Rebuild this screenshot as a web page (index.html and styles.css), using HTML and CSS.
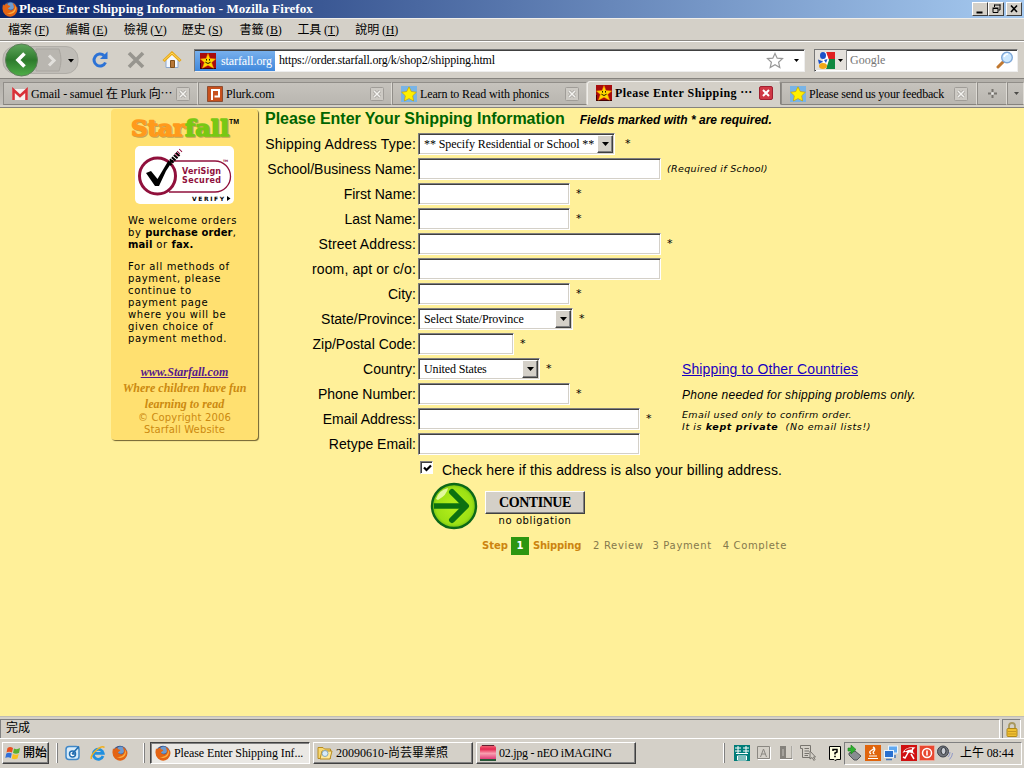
FILE: index.html
```html
<!DOCTYPE html>
<html lang="zh-Hant">
<head>
<meta charset="utf-8">
<title>Please Enter Shipping Information</title>
<link rel="stylesheet" href="styles.css">
</head>
<body>
<svg class="defs" width="0" height="0">
  <defs>
    <linearGradient id="gGreen" x1="0" y1="0" x2="0" y2="1"><stop offset="0" stop-color="#5fa65c"/><stop offset=".5" stop-color="#2d7a2c"/><stop offset="1" stop-color="#4fae48"/></linearGradient>
    <radialGradient id="gLime" cx=".5" cy=".5" r=".55"><stop offset="0" stop-color="#b6f01c"/><stop offset=".75" stop-color="#9ce014"/><stop offset="1" stop-color="#5cae10"/></radialGradient>
    <linearGradient id="gPink" x1="0" y1="0" x2="0" y2="1"><stop offset="0" stop-color="#f0707c"/><stop offset=".3" stop-color="#e62850"/><stop offset=".6" stop-color="#f8a0b0"/><stop offset="1" stop-color="#e03c78"/></linearGradient>
    <symbol id="firefox" viewBox="0 0 16 16"><circle cx="8" cy="7.8" r="7" fill="#2b4f8f"/><circle cx="8.6" cy="5.2" r="3.6" fill="#6d9bd0"/><path d="M1 3.2 2.2 4.4Q3.8 2.2 6 2.4L5.2 4Q8 4.2 8.4 5.6L6 7.2Q6.6 9.8 10 9.2 12.6 8.2 11.6 4.6L10.6 2Q14 3 14.4 6.6L15 5.4Q16.6 10.6 12.8 14 8 17.4 3.2 13.8-.2 10.6 .6 5.8Z" fill="#e36414"/><path d="M13.4 4.4Q15 8 12 11.6 8.6 14.2 4.6 12 9.4 12.8 12 9.2 13.6 7 13.4 4.4Z" fill="#fbb040"/></symbol>
    <symbol id="bluestar" viewBox="0 0 16 16"><path d="M0 0H16V16H0Z" fill="#78b4e6"/><path d="M8 .8 10.3 5.5 15.4 6.2 11.7 9.8 12.6 15 8 12.6 3.4 15 4.3 9.8 .6 6.2 5.7 5.5Z" fill="#fff000" stroke="#c8a000" stroke-width=".7"/></symbol>
    <symbol id="redstar" viewBox="0 0 16 16"><path d="M0 0H16V16H0Z" fill="#a80c0c"/><path d="M0 15.5H16M.5 16V10" stroke="#400" stroke-width="1"/><path d="M8 .6 9.9 5.4 15.6 6 11.6 9.6 13.6 15.2 8 12.2 2.4 15.2 4.4 9.6 .4 6 6.1 5.4Z" fill="#ffd800" stroke="#f89000" stroke-width=".5"/><path d="M6.5 6v1.6M9.5 6v1.6M5.4 9.2Q8 11.8 10.6 9.2" stroke="#202000" fill="none"/></symbol>
    <symbol id="closeTab" viewBox="0 0 14 14"><rect x=".5" y=".5" width="13" height="13" rx="1" fill="#cdcac4" stroke="#a09d98"/><path d="M4 4 10 10M10 4 4 10" stroke="#a5a29d" stroke-width="3"/><path d="M4 4 10 10M10 4 4 10" stroke="#f4f3f0" stroke-width="1.5"/></symbol>
    <symbol id="arrowDown" viewBox="0 0 7 4"><path d="M0 0H7L3.5 4Z" fill="#000"/></symbol>
  </defs>
</svg>
<div class="window">
  <header class="titlebar">
    <svg class="i16"><use href="#firefox"/></svg>
    <span class="title">Please Enter Shipping Information - Mozilla Firefox</span>
    <span class="winbtns">
      <svg class="winbtn" viewBox="0 0 13 12"><path d="M3 9.5H9" stroke="#000" stroke-width="2"/></svg>
      <svg class="winbtn restore" viewBox="0 0 13 12"><path d="M5 2H11M5 1.500V4M10.500 1.500V7H9" fill="none" stroke="#000"/><path d="M3.500 5.500H8.500V9.500H3.500ZM3 5H9" fill="none" stroke="#000"/></svg>
      <svg class="winbtn" viewBox="0 0 13 12"><path d="M3.500 2.500 9.500 9M9.500 2.500 3.500 9" stroke="#000" stroke-width="1.600"/></svg>
    </span>
  </header>
  <nav class="menubar">
    <span>檔案 (<u>F</u>)</span><span>編輯 (<u>E</u>)</span><span>檢視 (<u>V</u>)</span><span>歷史 (<u>S</u>)</span><span>書籤 (<u>B</u>)</span><span>工具 (<u>T</u>)</span><span>說明 (<u>H</u>)</span>
  </nav>
  <div class="toolbar">
    <svg class="navbtns" width="78" height="34" viewBox="0 0 78 34">
      <rect x="1" y="3.500" width="75" height="27" rx="12" fill="#c0bdb7" stroke="#b0ada7"/>
      <path d="M34 6H57Q61 17 57 28H34Z" fill="#b9b6b0" stroke="#a9a6a0"/>
      <path d="M47 12.500 52 17.500 47 22.500" fill="none" stroke="#e2e0dc" stroke-width="3"/>
      <path d="M66 16H72L69 19.500Z" fill="#000"/>
      <circle cx="19.500" cy="17" r="16" fill="url(#gGreen)" stroke="#5b7d58"/>
      <path d="M22.500 10.500 16 17 22.500 23.500" fill="none" stroke="#fff" stroke-width="3.600"/>
    </svg>
    <svg class="reload" width="18" height="18" viewBox="0 0 18 18"><path d="M13 4.500A6 6 0 1 0 14.500 11.500" fill="none" stroke="#2c72d6" stroke-width="3"/><path d="M16.500 .5V8H9Z" fill="#2c72d6"/></svg>
    <svg class="stop" width="18" height="18" viewBox="0 0 18 18"><path d="M2 2 16 16M16 2 2 16" stroke="#97958f" stroke-width="3.600"/></svg>
    <svg class="home" width="20" height="18" viewBox="0 0 20 18"><path d="M4 9V16.500H16V9L10 3Z" fill="#f4f8ff" stroke="#8ca8d0"/><path d="M8.500 9.500H12.500V16.500H8.500Z" fill="#b87838" stroke="#80501c"/><path d="M1.500 10 10 2 18.500 10" fill="none" stroke="#e8a818" stroke-width="3"/><path d="M2 9.300 10 2 18 9.300" fill="none" stroke="#ffdc60" stroke-width="1"/></svg>
    <div class="urlbar">
      <span class="identity"><svg class="i16"><use href="#redstar"/></svg><span class="idname">starfall.org</span></span>
      <span class="url">https://order.starfall.org/k/shop2/shipping.html</span>
      <svg class="fav" width="18" height="17" viewBox="0 0 18 17"><path d="M9 1.500 11.200 6.200 16.500 6.600 12.600 10.200 13.800 15.500 9 12.700 4.200 15.500 5.400 10.200 1.500 6.600 6.800 6.200Z" fill="#fff" stroke="#989898" stroke-width="1.200"/></svg>
      <svg class="dd" width="5" height="3"><use href="#arrowDown"/></svg>
    </div>
    <div class="search">
      <span class="engine"><svg width="17" height="17" viewBox="0 0 17 17"><path d="M8 0H17V7H10Z" fill="#e02020"/><path d="M9 7H17V17H8Z" fill="#108840"/><path d="M8 0 11 8 8 17H5V0Z" fill="#fff"/><ellipse cx="5" cy="3.500" rx="3" ry="3.500" fill="#1c50c8"/><path d="M0 7.500 5 9.500 1 12ZM6 8 9.500 7 8 11Z" fill="#1c50c8"/><ellipse cx="5" cy="14" rx="4" ry="3" fill="#f0a818"/></svg><svg width="5" height="3"><use href="#arrowDown"/></svg></span>
      <span class="ph">Google</span>
      <svg width="18" height="18" viewBox="0 0 18 18"><path d="M8 10 2 16" stroke="#c07830" stroke-width="3" stroke-linecap="round"/><circle cx="11" cy="6.500" r="5.300" fill="#cce8ff" stroke="#7fa8d8" stroke-width="1.400"/><path d="M8 6Q9 3 12 3" fill="none" stroke="#fff" stroke-width="1.500"/></svg>
    </div>
  </div>
  <div class="tabs">
    <div class="tab t1"><svg class="i16" viewBox="0 0 16 16"><path d="M0 3H16V14H0Z" fill="#f6f0ee"/><path d="M1.500 14V4L8 10 14.500 4V14" fill="none" stroke="#d83038" stroke-width="2.600"/></svg><span class="tt">Gmail - samuel 在 Plurk 向⋯</span><svg class="x"><use href="#closeTab"/></svg></div>
    <div class="tab t2"><svg class="i16" viewBox="0 0 16 16"><path d="M.5.5H15.500V15.500H.5Z" fill="#c8501c" stroke="#8c4c30"/><path d="M5 14V4H12V10.500H7.500" fill="none" stroke="#fff" stroke-width="2"/></svg><span class="tt">Plurk.com</span><svg class="x"><use href="#closeTab"/></svg></div>
    <div class="tab t3"><svg class="i16"><use href="#bluestar"/></svg><span class="tt">Learn to Read with phonics</span><svg class="x"><use href="#closeTab"/></svg></div>
    <div class="tab t4 active"><svg class="i16"><use href="#redstar"/></svg><span class="tt">Please Enter Shipping ⋯</span><svg class="x" viewBox="0 0 14 14"><rect x=".5" y=".5" width="13" height="13" rx="1.500" fill="#d03844" stroke="#a02030"/><path d="M4 4 10 10M10 4 4 10" stroke="#fff" stroke-width="2"/></svg></div>
    <div class="tab t5"><svg class="i16"><use href="#bluestar"/></svg><span class="tt">Please send us your feedback</span><svg class="x"><use href="#closeTab"/></svg></div>
    <div class="tab t6"><svg width="9" height="9" viewBox="0 0 9 9"><path d="M4.500 0V3M4.500 6V9M0 4.500H3M6 4.500H9" stroke="#77746f" stroke-width="2"/><path d="M3.500 3.500h2v2h-2z" fill="#eee"/></svg></div>
    <div class="tab t7"><svg width="5" height="3" opacity=".6"><use href="#arrowDown"/></svg></div>
  </div>

  <main class="page">
    <aside class="side">
      <svg class="logo" width="112" height="26" viewBox="0 0 112 26"><g font-family="DejaVu Serif" font-weight="bold" font-size="23" stroke-width="1.500" stroke-linejoin="round"><g fill="#a08040" stroke="#a08040" opacity=".6"><text x="4" y="22" textLength="54" lengthAdjust="spacingAndGlyphs">Star</text><text x="58" y="22" textLength="44" lengthAdjust="spacingAndGlyphs">fall</text></g><text x="3" y="21" textLength="54" lengthAdjust="spacingAndGlyphs" fill="#ff9a1c" stroke="#ff9a1c">Star</text><text x="57" y="21" textLength="44" lengthAdjust="spacingAndGlyphs" fill="#78c814" stroke="#78c814">fall</text></g><text x="101" y="9" font-family="Liberation Sans" font-weight="bold" font-size="7" textLength="10">TM</text></svg>
      <svg class="verisign" width="99" height="58" viewBox="0 0 99 58"><rect width="99" height="58" rx="5" fill="#fff"/><path d="M37 15H80A15.500 15.500 0 0 1 80 46H34" fill="none" stroke="#90103c" stroke-width="1.300"/><circle cx="22.500" cy="30" r="18" fill="#fff" stroke="#90103c" stroke-width="3"/><path d="M11 27 16 25 22.500 33 32 17 39 13 31 25 24 40H20Z" fill="#000"/><path d="M34 18 44 7" stroke="#000" stroke-width="5" stroke-dasharray="2 1"/><path d="M41 9 47 3" stroke="#90103c" stroke-width="4" stroke-dasharray="1 2"/><g font-family="DejaVu Sans" font-weight="bold"><text x="47" y="28" font-size="8" fill="#90103c" textLength="39">VeriSign</text><text x="47" y="37" font-size="8" fill="#90103c" textLength="39">Secured</text><text x="57" y="55" font-size="6" textLength="32">VERIFY</text><text x="88" y="16" font-size="3" fill="#90103c">TM</text></g><path d="M92 50 95.500 52.500 92 55Z"/></svg>
      <p class="s1">We welcome orders<br>by <b>purchase order</b>,<br><b>mail</b> or <b>fax.</b></p>
      <p class="s1">For all methods of<br>payment, please<br>continue to<br>payment page<br>where you will be<br>given choice of<br>payment method.</p>
      <div class="motto"><a class="site">www.Starfall.com</a><br><span class="m1">Where children have fun</span><br><span class="m2">learning to read</span></div>
      <div class="copy">© Copyright 2006<br>Starfall Website</div>
    </aside>
    <form class="form">
      <div class="head"><h1>Please Enter Your Shipping Information</h1><em>Fields marked with * are required.</em></div>
      <div class="row"><label class="wide">Shipping Address Type:</label><div class="cell"><span class="box sel w197"><span class="v1">** Specify Residential or School **</span><i><svg width="7" height="4"><use href="#arrowDown"/></svg></i></span><span class="star far">*</span></div></div>
      <div class="row"><label>School/Business Name:</label><div class="cell"><span class="box w243"></span><span class="req">(Required if School)</span></div></div>
      <div class="row"><label>First Name:</label><div class="cell"><span class="box w152"></span><span class="star">*</span></div></div>
      <div class="row"><label>Last Name:</label><div class="cell"><span class="box w152"></span><span class="star">*</span></div></div>
      <div class="row"><label class="mid">Street Address:</label><div class="cell"><span class="box w243"></span><span class="star">*</span></div></div>
      <div class="row"><label class="mid">room, apt or c/o:</label><div class="cell"><span class="box w243"></span></div></div>
      <div class="row"><label>City:</label><div class="cell"><span class="box w152"></span><span class="star">*</span></div></div>
      <div class="row"><label>State/Province:</label><div class="cell"><span class="box sel w155"><span class="v2">Select State/Province</span><i><svg width="7" height="4"><use href="#arrowDown"/></svg></i></span><span class="star">*</span></div></div>
      <div class="row"><label>Zip/Postal Code:</label><div class="cell"><span class="box w96"></span><span class="star">*</span></div></div>
      <div class="row"><label>Country:</label><div class="cell"><span class="box sel w122"><span class="v3">United States</span><i><svg width="7" height="4"><use href="#arrowDown"/></svg></i></span><span class="star">*</span></div><a class="other">Shipping to Other Countries</a></div>
      <div class="row"><label>Phone Number:</label><div class="cell"><span class="box w152"></span><span class="star">*</span></div><em class="phone">Phone needed for shipping problems only.</em></div>
      <div class="row"><label>Email Address:</label><div class="cell"><span class="box w222"></span><span class="star">*</span></div><div class="mailnote"><div>Email used only to confirm order.</div><div class="k">It is <b>kept private</b>&nbsp; (No email lists!)</div></div></div>
      <div class="row"><label>Retype Email:</label><div class="cell"><span class="box w222"></span></div></div>
      <div class="bill"><span class="check"><svg width="9" height="9" viewBox="0 0 9 9"><path d="M1 3.500 3.500 6 8 1.500" fill="none" stroke="#000" stroke-width="2.200"/></svg></span><span class="billtext">Check here if this address is also your billing address.</span></div>
      <div class="go">
        <svg width="48" height="48" viewBox="0 0 48 48"><circle cx="24" cy="24" r="22" fill="url(#gLime)" stroke="#0c6818" stroke-width="2.400"/><path d="M6 17Q9 8 18 6Q17 13 8 18Z" fill="#f4ffc0" opacity=".8"/><path d="M4 24H34" stroke="#0c7010" stroke-width="5.500"/><path d="M22 10 36 24 22 38" fill="none" stroke="#0c7010" stroke-width="6" stroke-linecap="round" stroke-linejoin="round"/></svg>
        <div class="gocol"><span class="btn">CONTINUE</span><span class="noob">no obligation</span></div>
      </div>
      <div class="steps"><b>Step</b><span class="one">1</span><b class="shp">Shipping</b><span class="st2">2 Review</span><span class="st3">3 Payment</span><span class="st4">4 Complete</span></div>
    </form>
  </main>

  <div class="status"><span class="done">完成</span><span class="lock"><svg width="12" height="15" viewBox="0 0 12 15"><path d="M3 7V4Q3 1 6 1T9 4V7" fill="none" stroke="#a89860" stroke-width="1.800"/><rect x="1" y="6.500" width="10" height="8" rx="1" fill="#f0c030" stroke="#b08818"/><path d="M2 9.500H10M2 12H10" stroke="#c89820"/></svg></span></div>
  <footer class="taskbar">
    <span class="start"><svg width="16" height="16" viewBox="0 0 16 16"><path d="M2.500 3Q5 1 8 3L7 7.500Q4 6 1.500 7.500Z" fill="#e85020"/><path d="M9 3.500Q12 5 15 3L14 8Q11 9.500 8 8Z" fill="#58b030"/><path d="M1.300 8.500Q4 7 6.800 8.500L5.800 13Q3 11.500 .3 13Z" fill="#3070d8"/><path d="M7.800 9Q11 10.500 13.700 9L12.500 13.500Q9.500 15 6.800 13.500Z" fill="#f8c020"/></svg><b>開始</b></span>
    <i class="grip g1"></i>
    <svg class="q1" width="16" height="16" viewBox="0 0 16 16"><rect x="1" y="1.500" width="13" height="13" rx="3" fill="#d8ecfa" stroke="#4088c8" stroke-width="1.500"/><circle cx="7.500" cy="9" r="3" fill="#fff" stroke="#206cb0" stroke-width="1.500"/><path d="M7 9 14 1.500M7 9H10" stroke="#206cb0" stroke-width="1.600"/></svg>
    <svg class="q2" width="16" height="16" viewBox="0 0 16 16"><path d="M13 11A5 5 0 1 1 13.200 8.300H4" fill="none" stroke="#2090e0" stroke-width="2.800"/><path d="M1.500 14Q0 11 6 5.500T14.500 2.500" fill="none" stroke="#f0b020" stroke-width="1.500"/></svg>
    <svg class="i16 q3"><use href="#firefox"/></svg>
    <i class="grip g2"></i>
    <span class="task on"><svg class="i16"><use href="#firefox"/></svg><span class="k1">Please Enter Shipping Inf...</span></span>
    <span class="task"><svg class="i16" viewBox="0 0 16 16"><path d="M1 4V2.500H6L7.500 4H13.500V13.500H1Z" fill="#f8d870" stroke="#b88c20"/><path d="M5 6H15L13 14H3Z" fill="#ffe898" stroke="#b88c20"/><circle cx="8" cy="8.500" r="3" fill="#d8ecfa" stroke="#88a8b8"/></svg><span class="k2">20090610-尚芸畢業照</span></span>
    <span class="task"><svg class="i16" viewBox="0 0 16 16"><path d="M0 2 2 0H14L16 2V14H0Z" fill="url(#gPink)"/><path d="M2 .5H14" stroke="#602030"/><path d="M0 15H16" stroke="#285838" stroke-width="2"/></svg><span class="k3">02.jpg - nEO iMAGING</span></span>
    <div class="right">
      <i class="grip"></i>
      <svg class="r1" width="16" height="16" viewBox="0 0 16 16"><path d="M0 0H16V16H0Z" fill="#007c78"/><path d="M1 3H7M1 6H7M4 1V8M9 3H15M9 6H15M12 1V8M2 8.500H14M3.500 11H12.500V15H3.500ZM4 13H12" fill="none" stroke="#fff" stroke-width="1"/></svg>
      <svg class="r2" width="14" height="14" viewBox="0 0 14 14"><path d="M.5.5H12.500V12.500H.5Z" fill="none" stroke="#8a8781"/><path d="M3.500 11 6.500 3 9.500 11M4.500 8H8.500" fill="none" stroke="#8a8781"/><path d="M13.500 1V13.500H1" fill="none" stroke="#fff"/></svg>
      <svg class="r3" width="13" height="14" viewBox="0 0 13 14"><path d="M0 0H6V13H0Z" fill="#85827c"/><path d="M2 3H4V10H2Z" fill="#a5a29c"/><path d="M12 0V12.500H6" fill="none" stroke="#85827c"/><path d="M13 0V13.500H0" fill="none" stroke="#fff"/></svg>
      <svg class="r4" width="16" height="16" viewBox="0 0 16 16"><path d="M.5.500H10.500V12.500H2.500V3.500H.5V.5M4.500 3.500H9M4.500 6H9M4.500 8.500H9M4.500 10.500H8" fill="none" stroke="#77746e"/><path d="M10 6V14L12 12.500 14 15.500 15 14.500 13.500 12H15.500Z" fill="#d4d0c8" stroke="#77746e"/></svg>
      <svg class="r5" width="13" height="15" viewBox="0 0 13 15"><path d="M.5.500H11.500V13.500H8L6 14.500 5 13.500H.5Z" fill="#ffffe1" stroke="#000"/><path d="M4 5V3.500H8V6L6 7V8.500M5.200 10.500H6.800" fill="none" stroke="#000" stroke-width="1.500"/></svg>
      <div class="tray">
        <svg width="16" height="16" viewBox="0 0 16 16"><path d="M2 8 8 6 14 11 10 15H7L2 10Z" fill="#888c90" stroke="#505458"/><path d="M1 3H4V0L9 4.500 4 9V6H1Z" fill="#30b030" stroke="#188018" stroke-width=".6"/></svg>
        <svg width="16" height="16" viewBox="0 0 16 16"><path d="M0 0H16V16H0Z" fill="#e0640c"/><path d="M3 13.500H13M4 11H12" stroke="#fff"/><path d="M6 9Q3 7 7 5T8 2Q11 4 9 6T9.500 9" fill="none" stroke="#fff" stroke-width="1.300"/></svg>
        <svg width="16" height="16" viewBox="0 0 16 16"><rect x="5.500" y="1" width="9" height="7" fill="#60a8f0" stroke="#e8f4ff"/><rect x="1.500" y="5.500" width="9" height="7" fill="#2870d0" stroke="#e8f4ff"/><path d="M3 14.500H9M12 10V13" stroke="#4878b8" stroke-width="1.500"/></svg>
        <svg width="16" height="16" viewBox="0 0 16 16"><path d="M0 0H16V16H0Z" fill="#d01010"/><path d="M1.500 8Q4 1.500 14.500 2.500Q9.500 5 14 9.500Q9 6.500 7 8Q4.500 6 1.500 8Z" fill="#fff"/><path d="M8 6 4 13 2 12M10 9 13 14" fill="none" stroke="#fff" stroke-width="1.500"/><path d="M4 6Q7 3.500 11 3.800" fill="none" stroke="#d01010" stroke-width="1.300"/></svg>
        <svg width="16" height="16" viewBox="0 0 16 16"><rect x=".5" y=".5" width="15" height="15" rx="1" fill="#e84830" stroke="#f0a898"/><circle cx="8" cy="8" r="4.500" fill="none" stroke="#fff" stroke-width="1.500"/><path d="M8 5.500V10.500" stroke="#fff" stroke-width="1.600"/></svg>
        <svg width="16" height="16" viewBox="0 0 16 16"><circle cx="6" cy="6.500" r="5.500" fill="#70747c" stroke="#40444c"/><ellipse cx="6.500" cy="6" rx="2.500" ry="3.500" fill="#c8ccd4" stroke="#303438"/><path d="M11 12Q13 10 13 7M12.500 14.500Q15.500 11 15.500 8" fill="none" stroke="#9098c8"/></svg>
        <span class="clock">上午 08:44</span>
      </div>
    </div>
  </footer>
</div>
</body>
</html>
```

FILE: styles.css
```css
* { box-sizing: border-box; }
body { margin: 0; background: #d4d0c8; font: 12px/14px "Liberation Serif", "Noto Sans CJK TC", serif; color: #000; }
svg { display: block; flex: none; }
.defs { position: absolute; }
.window { width: 1024px; height: 768px; display: flex; flex-direction: column; overflow: hidden; white-space: nowrap; }
.i16 { width: 16px; height: 16px; }

.titlebar { height: 18px; flex: none; display: flex; align-items: center; padding: 0 2px 0 2px; background: linear-gradient(90deg, #0a246a, #a6caf0); }
.title { color: #fff; font-weight: bold; font-size: 13px; margin-left: 1px; letter-spacing: .08px; }
.winbtns { display: flex; margin-left: auto; }
.winbtn { width: 16px; height: 14px; background: #d4d0c8; border: 1px solid; border-color: #fff #404040 #404040 #fff; }
.restore { margin-right: 2px; }

.menubar { height: 23px; flex: none; display: flex; align-items: center; border-top: 1px solid #f0eeea; border-bottom: 1px solid #8c8984; padding: 1px 0 0 8px; letter-spacing: -.15px; }
.menubar span { width: 57.9px; }
.toolbar { height: 37px; flex: none; display: flex; align-items: center; border-top: 1px solid #fff; padding-left: 2px; }
.reload { margin-left: 11px; }
.stop { margin-left: 18px; }
.home { margin-left: 17px; }
.urlbar { margin-left: 12px; width: 611px; height: 23px; background: #fff; border: 1px solid; border-color: #777 #eee #eee #777; box-shadow: inset 1px 1px #404040; display: flex; align-items: center; }
.identity { height: 20px; width: 80px; margin-top: 1px; display: flex; align-items: center; padding-left: 5px; background: linear-gradient(#78b0ec, #4088dc); color: #fff; }
.identity .idname { margin-left: 5px; letter-spacing: -.1px; }
.url { margin-left: 4px; letter-spacing: -.17px; }
.fav { margin-left: auto; }
.dd { margin: 1px 5px 0 10px; }
.search { margin-left: 9px; width: 204px; height: 23px; background: #fff; border: 1px solid; border-color: #777 #eee #eee #777; box-shadow: inset 1px 1px #404040; display: flex; align-items: center; padding-right: 3px; }
.engine { display: flex; align-items: center; gap: 3px; width: 32px; height: 20px; padding-left: 3px; border-right: 1px solid #888; background: #e4e1dc; }
.ph { color: #777; margin: 0 auto 0 3px; }

.tabs { height: 30px; flex: none; display: flex; align-items: flex-start; padding: 2px 0 0 3px; background: linear-gradient(#b4b1ab 0 3px, #c3c0ba 26px, #d4d0c8 26px, #d4d0c8 28px, #85827d 28px); border-top: 1px solid #85827d; }
.tab { height: 23px; margin-top: 1px; display: flex; align-items: center; border: 1px solid #918e89; border-bottom-color: #85827d; padding: 0 6px 0 8px; background: linear-gradient(#c6c3bd, #b9b6b0); border-right-color: #dedbd5; }
.tab .tt { margin-left: 3px; letter-spacing: -.14px; }
.x { width: 14px; height: 14px; margin-left: auto; }
.t1 { width: 195px; padding-right: 7px; }
.t2 { width: 194px; padding-right: 7px; }
.t3 { width: 195px; padding-right: 7px; }
.t4 { width: 194px; font-weight: bold; padding-right: 7px; }
.t4 .tt { letter-spacing: .42px; }
.active { background: #d4d0c8; border-color: #f0eeea #85827d transparent #f0eeea; border-radius: 3px 3px 0 0; height: 24px; margin-top: 0; }
.t5 { width: 196px; padding-right: 8px; }
.t5 .tt { letter-spacing: -.2px; }
.t6 { width: 30px; padding: 0; justify-content: center; }
.t7 { width: 17px; padding: 0 0 0 6px; }

.page { height: 608px; flex: none; background: #fff099; display: flex; align-items: flex-start; padding: 0 0 0 111px; }
.side { width: 147px; height: 331px; margin-top: 1px; background: #ffe070; border-radius: 4px; box-shadow: 1px 1px 1px #6f6130; display: flex; flex-direction: column; align-items: flex-start; font: 10px/12px "DejaVu Sans", sans-serif; }
.logo { margin: 6px 0 0 17px; }
.verisign { margin: 5px 0 0 24px; }
.side p { margin: 11px 0 0 17px; letter-spacing: .63px; }
.side p + p { margin-top: 10px; }
.side b { letter-spacing: .1px; }
.motto { width: 147px; text-align: center; margin-top: 19px; font: italic bold 12px/16px "Liberation Serif", serif; color: #cc8a10; }
.site { color: #551a8b; text-decoration: underline; }
.copy { width: 147px; text-align: center; color: #cc8a10; letter-spacing: .15px; }

.form { margin-left: 2px; font: 14px/16px "Liberation Sans", sans-serif; }
.head { height: 23px; display: flex; align-items: center; padding: 0 0 2px 5px; }
.head h1 { margin: 0; font-size: 16px; color: #006400; letter-spacing: -.03px; }
.head em { margin: 3px 0 0 15px; font-size: 12px; font-weight: bold; }
.row { height: 25px; display: grid; grid-template-columns: 156px 262px auto; column-gap: 2px; align-items: center; }
.row label { text-align: right; margin-top: 1px; }
.wide { letter-spacing: .18px; }
.mid { letter-spacing: .12px; }
.cell { display: flex; align-items: center; }
.box { height: 22px; background: #fff; border: 1px solid; border-color: #808080 #fff #fff #808080; box-shadow: inset 1px 1px #404040, inset -1px -1px #d4d0c8; flex: none; }
.sel { display: flex; align-items: center; justify-content: space-between; padding: 0 1px 0 5px; font: 12px/14px "Liberation Serif", serif; letter-spacing: -.13px; }
.sel .v1 { letter-spacing: -.08px; }
.sel i { width: 16px; height: 18px; display: flex; align-items: center; justify-content: center; background: #d4d0c8; border: 1px solid; border-color: #fff #404040 #404040 #fff; box-shadow: inset -1px -1px #808080; }
.w197 { width: 197px; } .w243 { width: 243px; } .w152 { width: 152px; } .w155 { width: 155px; } .w96 { width: 96px; } .w122 { width: 122px; } .w222 { width: 222px; }
.star { margin-left: 6px; font: 11px/12px "DejaVu Sans", sans-serif; }
.far { margin-left: 10px; }
.req { margin-left: 6px; font: italic 9.500px/12px "DejaVu Sans", sans-serif; letter-spacing: .35px; }
.other { color: #1a00c0; text-decoration: underline; margin-top: 1px; letter-spacing: .12px; }
.phone { font-size: 12px; margin-top: 3px; letter-spacing: .25px; }
.mailnote { font: italic 9.500px/12px "DejaVu Sans", sans-serif; margin: 2px 0 -2px; letter-spacing: .37px; }
.mailnote .k { letter-spacing: .6px; }
.bill { display: flex; align-items: center; height: 24px; padding: 3px 0 0 160px; }
.check { width: 13px; height: 13px; margin-top: -5px; background: #fff; border: 1px solid; border-color: #808080 #fff #fff #808080; box-shadow: inset 1px 1px #404040; padding: 2px 0 0 2px; }
.billtext { margin-left: 9px; letter-spacing: .11px; }
.go { display: flex; padding: 2px 0 0 170px; height: 52px; }
.gocol { margin: 9px 0 0 7px; width: 100px; display: flex; flex-direction: column; align-items: center; }
.btn { width: 100px; height: 23px; display: flex; align-items: center; justify-content: center; font: bold 14px/16px "Liberation Serif", serif; letter-spacing: -.45px; background: #d4d0c8; border: 1px solid; border-color: #fff #404040 #404040 #fff; box-shadow: inset -1px -1px #808080; }
.noob { margin-top: 1px; font: 10px/12px "DejaVu Sans", sans-serif; letter-spacing: .6px; }
.steps { display: flex; align-items: center; height: 18px; padding-left: 222px; margin-top: 5px; font: 10px/12px "DejaVu Sans", sans-serif; color: #85794c; letter-spacing: .65px; }
.steps b { color: #cc8410; letter-spacing: 0; }
.steps .shp { letter-spacing: -.2px; }
.one { width: 18px; height: 18px; margin: 0 4px 0 3px; background: #2c9610; color: #fff; font-weight: bold; text-align: center; line-height: 18px; letter-spacing: 0; }
.st2 { margin-left: 12px; } .st3 { margin-left: 9px; } .st4 { margin-left: 11px; }

.status { height: 22px; flex: none; display: flex; padding: 2px 3px 0 0; border-top: 1px solid #c0bdb6; }
.done { width: 1000px; height: 20px; border: 1px solid; border-color: #808080 #fff #fff #808080; padding: 1px 0 0 5px; }
.lock { margin-left: 2px; width: 19px; height: 20px; border: 1px solid; border-color: #808080 #fff #fff #808080; padding: 2px 0 0 3px; }
.taskbar { height: 30px; flex: none; display: flex; align-items: center; border-top: 1px solid #fff; padding: 0 2px 1px; }
.start { width: 47px; height: 22px; display: flex; align-items: center; gap: 2px; padding-left: 2px; border: 1px solid; border-color: #fff #404040 #404040 #fff; box-shadow: inset -1px -1px #808080; }
.start b { font-weight: 500; }
.grip { width: 2px; height: 20px; border-left: 1px solid #fff; border-right: 1px solid #808080; flex: none; }
.g1 { margin-left: 7px; }
.q1 { margin-left: 7px; } .q2 { margin-left: 9px; } .q3 { margin-left: 6px; }
.g2 { margin: 0 5px 0 15px; }
.task { width: 160px; height: 22px; margin-right: 3px; padding-left: 3px; display: flex; align-items: center; gap: 3px; border: 1px solid; border-color: #fff #404040 #404040 #fff; box-shadow: inset -1px -1px #808080; }
.task.on { background: #eae8e4; border-color: #404040 #fff #fff #404040; box-shadow: inset 1px 1px #808080; padding-left: 4px; }
.k1 { letter-spacing: -.1px; }
.k3 { letter-spacing: -.27px; }
.right { margin-left: auto; display: flex; align-items: center; }
.r1 { margin-left: 9px; } .r2 { margin-left: 7px; } .r3 { margin-left: 9px; } .r4 { margin-left: 7px; } .r5 { margin-left: 13px; }
.tray { margin-left: 2px; width: 178px; height: 23px; display: flex; align-items: center; gap: 2px; padding-left: 2px; border: 1px solid; border-color: #808080 #fff #fff #808080; }
.clock { margin-left: 5px; letter-spacing: -.1px; }
```
